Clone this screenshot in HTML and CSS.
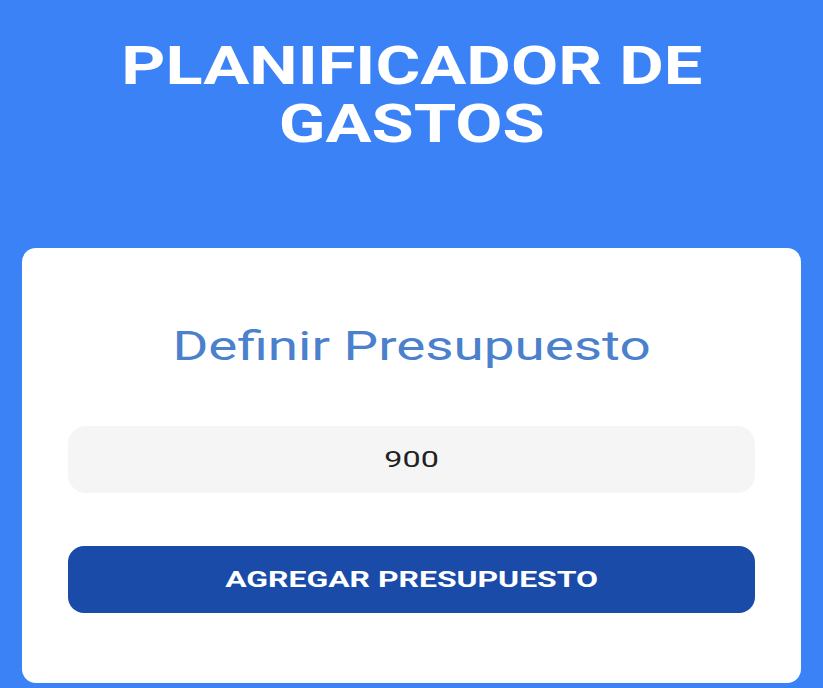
FILE: index.html
```html
<!DOCTYPE html>
<html lang="es">
<head>
<meta charset="utf-8">
<title>Planificador de Gastos</title>
<link rel="stylesheet" href="styles.css">
</head>
<body>
<header class="header">
  <h1 class="title"><span class="wide wide-title">PLANIFICADOR DE<br>GASTOS</span></h1>
</header>
<main class="card">
  <h2 class="card-title"><span class="wide wide-sub">Definir Presupuesto</span></h2>
  <form class="form">
    <div class="budget-input"><span class="wide wide-num">900</span></div>
    <button class="btn" type="button"><span class="wide wide-btn">AGREGAR PRESUPUESTO</span></button>
  </form>
</main>
</body>
</html>
```

FILE: styles.css
```css
* { box-sizing: border-box; }
html, body { margin: 0; padding: 0; }
body {
  background: #3b82f6;
  font-family: Roboto, "Liberation Sans", sans-serif;
  width: 823px;
  height: 688px;
  overflow: hidden;
}
.wide {
  display: inline-block;
  transform-origin: center;
}
.wide-title { transform: scaleX(1.27); }
.wide-sub { transform: scaleX(1.37); }
.wide-num { transform: scaleX(1.47); }
.wide-btn { transform: scaleX(1.45); }
.header {
  padding-top: 37px;
  height: 248px;
}
.title {
  margin: 0;
  color: #ffffff;
  font-size: 54px;
  line-height: 58px;
  font-weight: 700;
  text-align: center;
}
.card {
  margin: 0 22px;
  background: #ffffff;
  border-radius: 14px;
  padding: 75px 46px 70px;
  height: 435px;
}
.card-title {
  margin: 0;
  font-size: 40px;
  line-height: 48px;
  font-weight: 400;
  color: #4a80cc;
  text-align: center;
}
.form {
  margin-top: 55px;
  display: flex;
  flex-direction: column;
  gap: 53px;
}
.budget-input {
  height: 67px;
  width: 100%;
  background: #f5f5f5;
  border-radius: 18px;
  font-size: 22px;
  color: #222222;
  display: flex;
  align-items: center;
  justify-content: center;
}
.btn {
  height: 67px;
  width: 100%;
  border: none;
  background: #1a4ba8;
  border-radius: 16px;
  color: #ffffff;
  font-family: Roboto, "Liberation Sans", sans-serif;
  font-size: 22px;
  font-weight: 700;
  cursor: pointer;
}
```
